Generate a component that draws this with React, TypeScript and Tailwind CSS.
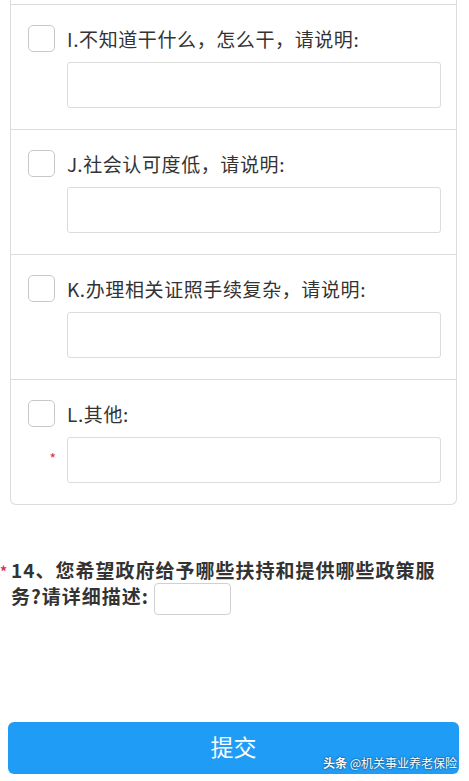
import React from 'react';

const options = [
  { label: 'I.不知道干什么，怎么干，请说明:', required: false },
  { label: 'J.社会认可度低，请说明:', required: false },
  { label: 'K.办理相关证照手续复杂，请说明:', required: false },
  { label: 'L.其他:', required: true },
];

function OptionItem({ label, required }: { label: string; required: boolean }) {
  return (
    <div className="border-t border-[#dcdcdc] pt-[20px] pb-[21px] pl-[17px] pr-[15px]">
      <div className="flex items-center">
        <span className="h-[27px] w-[27px] shrink-0 rounded-[5px] border border-[#c8c8c8] bg-white" />
        <span className="ml-[12px] text-[19px] leading-[27px] tracking-[0.6px] text-[#333]">{label}</span>
      </div>
      <div className="mt-[10px] flex items-center">
        <div className="flex w-[39px] shrink-0 justify-end pr-[11px] pb-[4px]">
          {required ? <span className="text-[14px] leading-none text-[#d9304a]">*</span> : null}
        </div>
        <div className="h-[46px] flex-1 rounded-[3px] border border-[#dcdcdc] bg-white" />
      </div>
    </div>
  );
}

export default function App() {
  return (
    <div
      className="relative h-[781px] w-[469px] overflow-hidden bg-white"
      style={{ fontFamily: '"Noto Sans CJK SC", "Noto Sans", sans-serif' }}
    >
      <div className="mx-[10px] w-[447px] rounded-b-[6px] border-x border-b border-[#dcdcdc]">
        <div className="h-[4px]" />
        {options.map((o) => (
          <OptionItem key={o.label} label={o.label} required={o.required} />
        ))}
      </div>

      <div className="relative mt-[52px] pl-[11px] pr-[30px]">
        <span className="absolute left-[0px] top-[4px] text-[14px] font-bold text-[#d9304a]">*</span>
        <p className="text-[19px] font-bold leading-[26px] tracking-[1px] text-[#333]">
          14、您希望政府给予哪些扶持和提供哪些政策服务?请详细描述:
          <span className="ml-[5px] inline-block h-[32px] w-[77px] rounded-[4px] border border-[#d0d0d0] bg-white align-middle" />
        </p>
      </div>

      <div className="absolute left-[8px] top-[722px] flex h-[52px] w-[451px] items-center justify-center rounded-[6px] bg-[#1f9cf6] pb-[4px]">
        <span className="text-[23px] font-normal leading-none text-white">提交</span>
        <span
          className="absolute bottom-[5px] right-[2px] text-[12px] leading-none text-white"
          style={{ textShadow: '0 0 2px rgba(0,0,0,0.8)' }}
        >
          <span className="font-bold">头条</span> @机关事业养老保险
        </span>
      </div>
    </div>
  );
}
